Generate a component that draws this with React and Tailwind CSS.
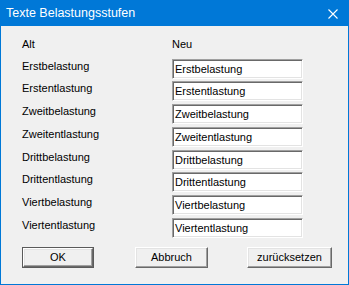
import React from "react";

const rows = [
  { text: "Erstbelastung", gap: "mt-0" },
  { text: "Erstentlastung", gap: "mt-[2px]" },
  { text: "Zweitbelastung", gap: "mt-[3px]" },
  { text: "Zweitentlastung", gap: "mt-[3px]" },
  { text: "Drittbelastung", gap: "mt-[3px]" },
  { text: "Drittentlastung", gap: "mt-[2px]" },
  { text: "Viertbelastung", gap: "mt-[3px]" },
  { text: "Viertentlastung", gap: "mt-[3px]" },
];

function Button({ label, width, isDefault }) {
  // classic raised button, default one gets a dark frame
  const face = (
    <div className="flex h-full w-full items-center justify-center border border-t-white border-l-white border-b-[#696969] border-r-[#696969] bg-[#f0f0f0] shadow-[inset_-1px_-1px_0_#a0a0a0,inset_1px_1px_0_#e3e3e3]">
      {label}
    </div>
  );
  if (isDefault) {
    return (
      <div className={`h-[21px] ${width} border border-[#5a5a5a]`}>{face}</div>
    );
  }
  return <div className={`h-[21px] ${width}`}>{face}</div>;
}

export default function App() {
  return (
    <div
      className="flex h-[285px] w-[349px] flex-col border-x border-b border-[#0078d7] bg-[#f0f0f0] text-[11px] leading-[13px] text-black"
      style={{ fontFamily: '"Liberation Sans", Arial, sans-serif' }}
    >
      <div className="-mx-px flex h-[26px] items-center justify-between bg-[#0078d7] pl-[6px] pr-[11px] text-[12.5px] text-white">
        <span>Texte Belastungsstufen</span>
        <svg width="10" height="10" viewBox="0 0 10 10" className="mt-px">
          <path d="M0.5 0.5 L9.5 9.5 M9.5 0.5 L0.5 9.5" stroke="white" strokeWidth="1.1" fill="none" />
        </svg>
      </div>

      <div className="flex flex-col pl-[21px]">
        <div className="mt-[12px] grid grid-cols-[150px_131px]">
          <span>Alt</span>
          <span>Neu</span>
        </div>

        <div className="mt-[8px] flex flex-col">
          {rows.map((r) => (
            <div key={r.text} className={`grid grid-cols-[150px_131px] ${r.gap}`}>
              <span className="mt-px">{r.text}</span>
              <div className="flex h-[20px] items-center border border-t-[#a0a0a0] border-l-[#a0a0a0] border-b-white border-r-white bg-white pl-[2px] shadow-[inset_1px_1px_0_#696969,inset_-1px_-1px_0_#e3e3e3]">
                {r.text}
              </div>
            </div>
          ))}
        </div>

        <div className="mt-[9px] flex">
          <Button label="OK" width="w-[72px]" isDefault />
          <div className="ml-[41px]">
            <Button label="Abbruch" width="w-[73px]" />
          </div>
          <div className="ml-[39px]">
            <Button label="zurücksetzen" width="w-[85px]" />
          </div>
        </div>
      </div>
    </div>
  );
}
